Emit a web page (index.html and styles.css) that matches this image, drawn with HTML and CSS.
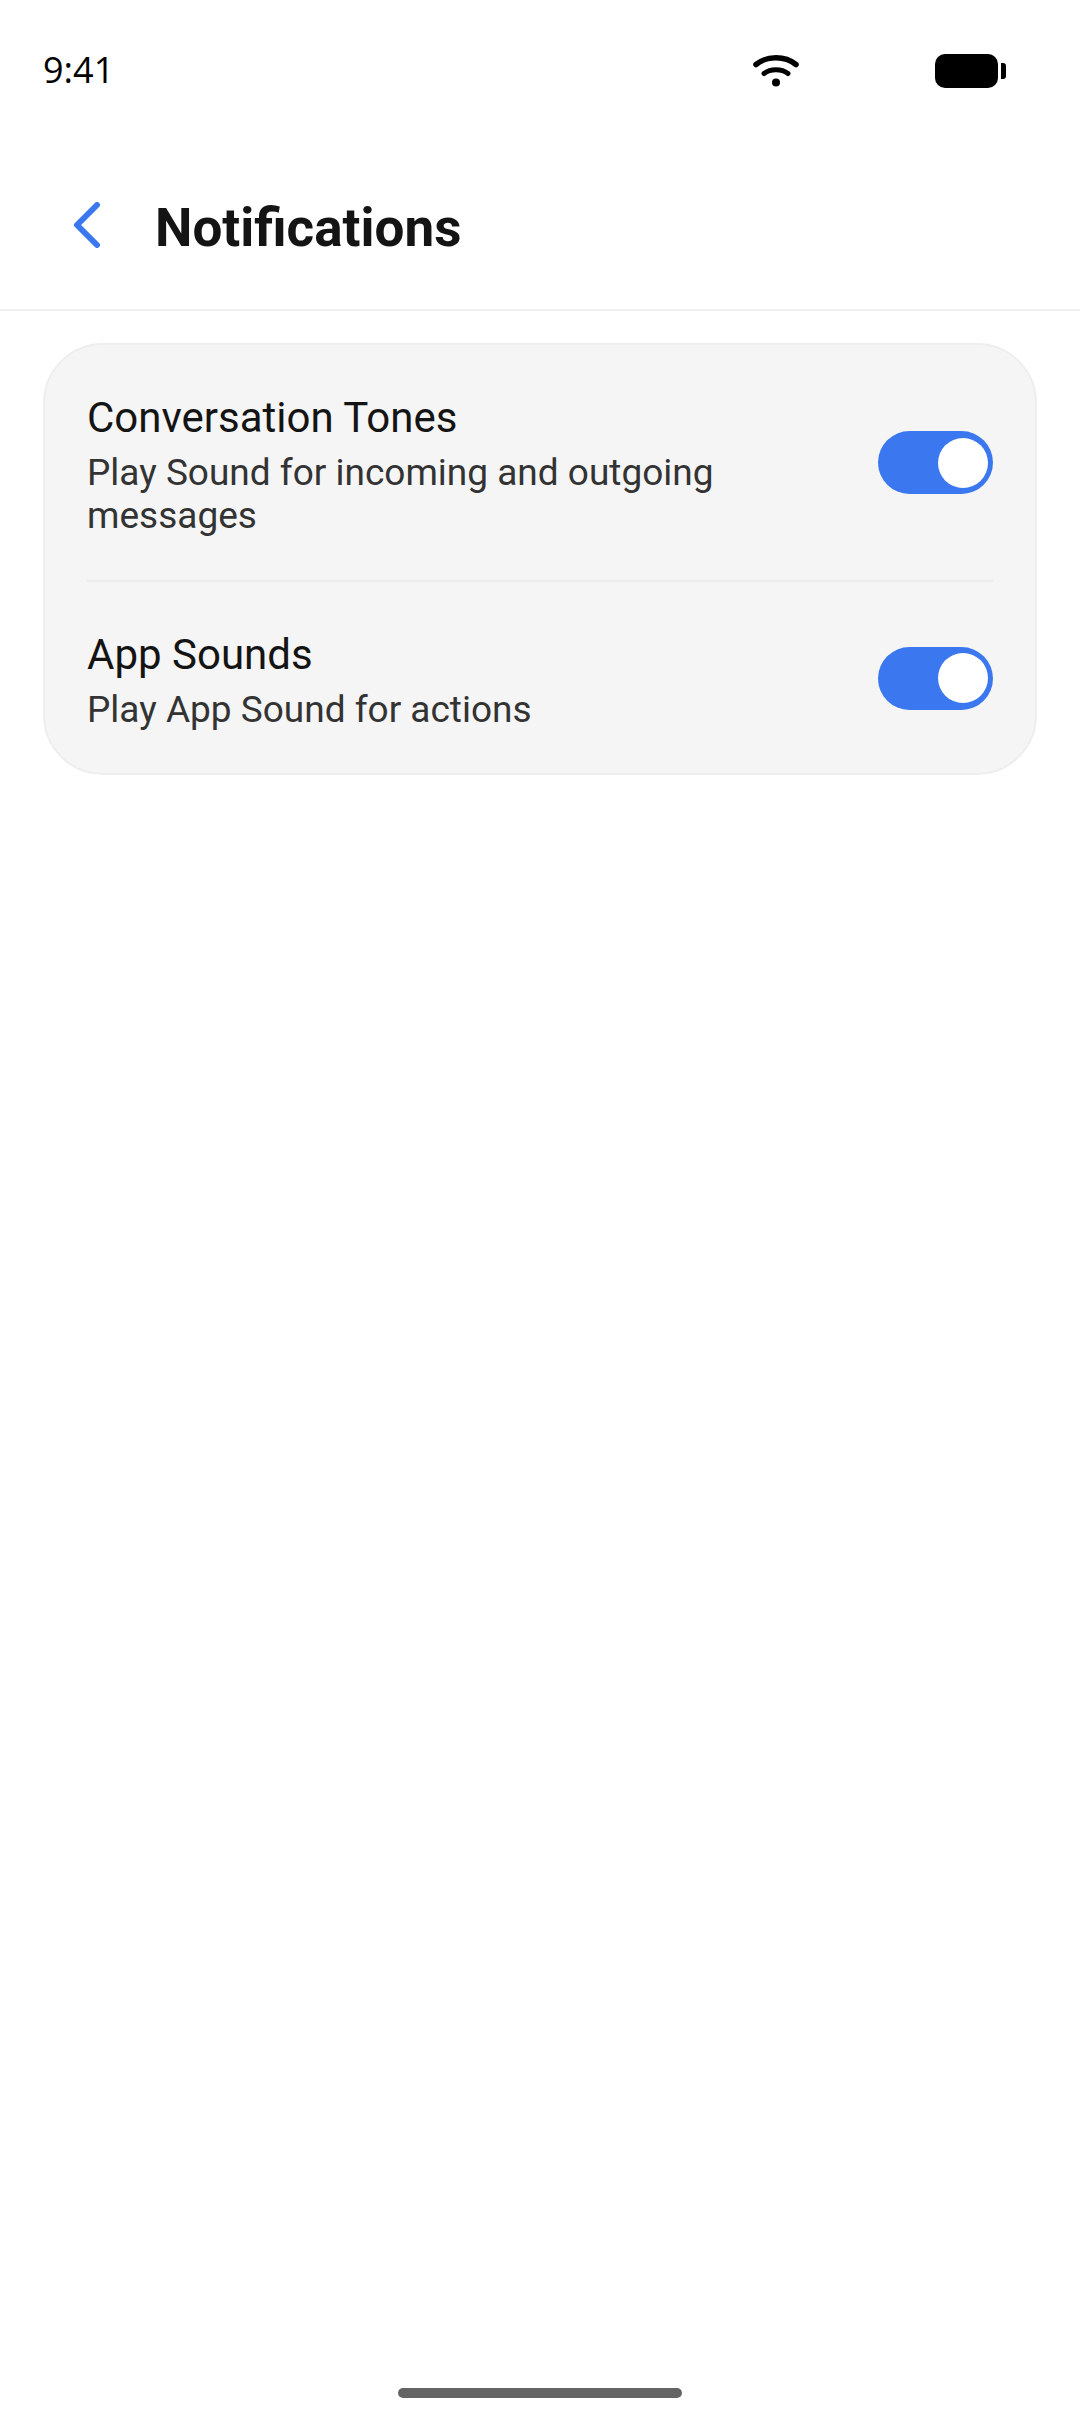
FILE: index.html
```html
<!DOCTYPE html>
<html lang="en">
<head>
    <meta charset="UTF-8">
    <title>Notifications</title>
    <link rel="stylesheet" href="styles.css">
</head>
<body>
<div class="phone">
    <div class="status">
        <span class="time">9:41</span>
        <svg class="wifi" width="46" height="34" viewBox="0 0 46 34">
            <path d="M3 11.5C14 2.5 32 2.5 43 11.5" fill="none" stroke="#000" stroke-width="5.5" stroke-linecap="round"/>
            <path d="M11 20.5C17.5 15.5 28.500 15.500 35 20.5" fill="none" stroke="#000" stroke-width="5" stroke-linecap="round"/>
            <circle cx="23" cy="29.500" r="4" fill="#000"/>
        </svg>
        <svg class="battery" width="72" height="36" viewBox="0 0 72 36">
            <rect x="0" y="2" width="63" height="34" rx="10" fill="#000"/>
            <path d="M66 11h2a3 3 0 0 1 3 3v10a3 3 0 0 1-3 3h-2z" fill="#000"/>
        </svg>
    </div>
    <div class="header">
        <svg class="back" width="28" height="46" viewBox="0 0 28 46">
            <path d="M24 3L4 23L24 43" fill="none" stroke="#3b78f0" stroke-width="6" stroke-linecap="round" stroke-linejoin="round"/>
        </svg>
        <h1>Notifications</h1>
    </div>
    <div class="card">
        <div class="row row-first">
            <div class="text">
                <div class="name">Conversation Tones</div>
                <div class="desc">Play Sound for incoming and outgoing messages</div>
            </div>
            <div class="toggle"><span class="knob"></span></div>
        </div>
        <div class="row row-last">
            <div class="text">
                <div class="name">App Sounds</div>
                <div class="desc">Play App Sound for actions</div>
            </div>
            <div class="toggle"><span class="knob"></span></div>
        </div>
    </div>
    <div class="spacer"></div>
    <div class="home"></div>
</div>
</body>
</html>
```
FILE: styles.css
```css
html, body {
    margin: 0; padding: 0; background: #fff;
}
h1 {
    margin: 0;
}
.phone {
    width: 1080px; height: 2424px; display: flex; flex-direction: column;
    font-family: Roboto, sans-serif; overflow: hidden;
}
.status {
    height: 140px; display: flex; align-items: center; box-sizing: border-box; padding: 0 73px 0 43px;
}
.time {
    font-family: "Open Sans", sans-serif; font-size: 36px; color: #000; flex: 1; padding-bottom: 2px;
}
.wifi {
    margin-right: 136px;
}
.header {
    height: 171px; box-sizing: border-box; display: flex; align-items: center; padding: 0 0 0 73px;
    border-bottom: 2px solid #f0f0f0;
}
.back {
    margin-right: 54px;
}
.header h1 {
    font-size: 53px; font-weight: 700; color: #141414; padding-top: 7px;
}
.card {
    margin: 32px 43px 0 43px; background: #f5f5f5; border: 2px solid #eeeeee; border-radius: 60px;
    padding: 0 42px; box-sizing: border-box; height: 432px;
}
.row {
    display: flex; align-items: center; justify-content: space-between; box-sizing: border-box;
}
.row-first {
    height: 237px; border-bottom: 2px solid #ececec;
}
.row-first .text {
    padding-top: 4px;
}
.row-last {
    height: 191px; padding-top: 1px;
}
.row-last .text {
    padding-top: 3px;
}
.text {
    width: 680px;
}
.name {
    font-size: 42px; line-height: 52px; margin-bottom: 7px; color: #141414;
}
.desc {
    font-size: 37px; line-height: 43px; color: #333;
}
.toggle {
    width: 115px; height: 63px; border-radius: 32px; background: #3b78f0; display: flex; align-items: center;
    justify-content: flex-end; padding-right: 5px; box-sizing: border-box;
}
.knob {
    width: 50px; height: 50px; border-radius: 50%; background: #fff;
}
.spacer {
    flex: 1;
}
.home {
    width: 284px; height: 10px; border-radius: 5px; background: #646464; margin: 0 auto 26px auto;
}
```
